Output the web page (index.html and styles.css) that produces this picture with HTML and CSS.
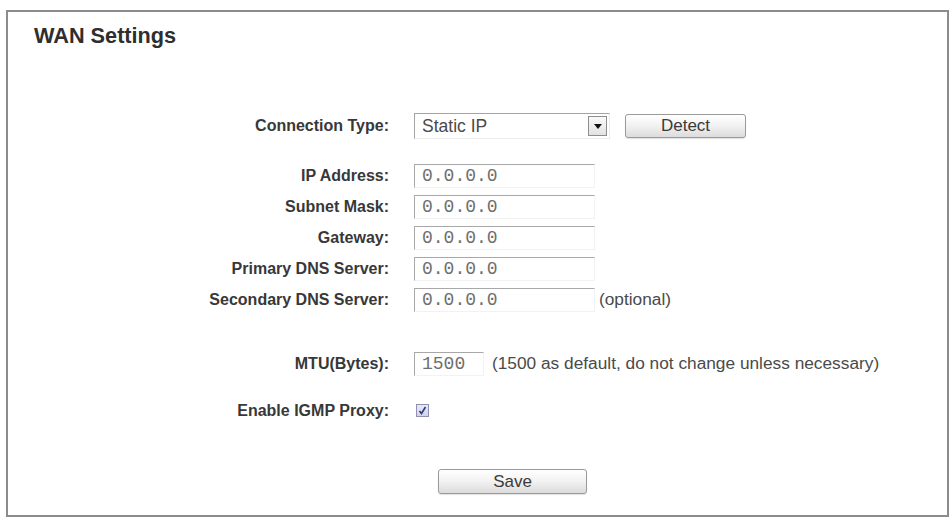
FILE: index.html
```html
<!DOCTYPE html>
<html lang="en">
<head>
<meta charset="utf-8">
<title>WAN Settings</title>
<link rel="stylesheet" href="styles.css">
</head>
<body>
<div class="frame">
  <h1 class="title">WAN Settings</h1>

  <form class="form">
    <div class="row row-conn">
      <label class="label">Connection Type:</label>
      <div class="ctrl">
        <div class="select">
          <span class="select-text">Static IP</span>
          <span class="select-arrow">
            <svg width="8" height="5" viewBox="0 0 8 5"><path d="M0 0H8L4 5Z" fill="#111"/></svg>
          </span>
        </div>
        <button type="button" class="btn btn-detect">Detect</button>
      </div>
    </div>

    <div class="group">
      <div class="row">
        <label class="label">IP Address:</label>
        <div class="ctrl"><input class="field" type="text" value="0.0.0.0"></div>
      </div>
      <div class="row">
        <label class="label">Subnet Mask:</label>
        <div class="ctrl"><input class="field" type="text" value="0.0.0.0"></div>
      </div>
      <div class="row">
        <label class="label">Gateway:</label>
        <div class="ctrl"><input class="field" type="text" value="0.0.0.0"></div>
      </div>
      <div class="row">
        <label class="label">Primary DNS Server:</label>
        <div class="ctrl"><input class="field" type="text" value="0.0.0.0"></div>
      </div>
      <div class="row">
        <label class="label">Secondary DNS Server:</label>
        <div class="ctrl"><input class="field" type="text" value="0.0.0.0"><span class="note note-opt">(optional)</span></div>
      </div>
    </div>

    <div class="row row-mtu">
      <label class="label">MTU(Bytes):</label>
      <div class="ctrl"><input class="field field-short" type="text" value="1500"><span class="note note-mtu">(1500 as default, do not change unless necessary)</span></div>
    </div>

    <div class="row row-igmp">
      <label class="label">Enable IGMP Proxy:</label>
      <div class="ctrl">
        <span class="check">
          <svg width="9" height="9" viewBox="0 0 9 9"><path d="M1.5 5L3.5 7.5L7.5 1" fill="none" stroke="#2a3a8a" stroke-width="1.6"/></svg>
        </span>
      </div>
    </div>

    <div class="row row-save">
      <span class="label"></span>
      <div class="ctrl"><button type="button" class="btn btn-save">Save</button></div>
    </div>
  </form>
</div>
</body>
</html>
```

FILE: styles.css
```css
* { box-sizing: border-box; }

html, body {
  margin: 0;
  padding: 0;
  background: #ffffff;
}

body {
  font-family: "Liberation Sans", Arial, sans-serif;
  color: #3a3a3a;
}

.frame {
  margin: 10px 2px 0 6px;
  height: 507px;
  border: 2px solid #8c8c8c;
  background: #fff;
}

.title {
  margin: 12px 0 0 26px;
  font-size: 21.7px;
  line-height: 24px;
  font-weight: bold;
  color: #2e2e2e;
}

.form {
  display: flex;
  flex-direction: column;
  margin-top: 65px;
}

.row {
  display: flex;
  align-items: center;
  height: 31px;
}

.label {
  width: 381px;
  text-align: right;
  font-size: 16px;
  font-weight: bold;
  color: #383838;
  flex: none;
}

.ctrl {
  margin-left: 25px;
  display: flex;
  align-items: center;
}

.row-conn { height: 26px; }

.select {
  width: 196px;
  height: 26px;
  display: flex;
  align-items: center;
  justify-content: space-between;
  border-top: 1px solid #a4a4a4;
  border-left: 1px solid #a4a4a4;
  border-right: 1px solid #ececec;
  border-bottom: 1px solid #ececec;
  padding: 0 2px 0 7px;
}

.select-text {
  font-size: 17.5px;
  color: #4a4a4a;
}

.select-arrow {
  width: 19px;
  height: 20px;
  display: flex;
  align-items: center;
  justify-content: center;
  border: 1px solid #8e8e8e;
  background: linear-gradient(#fafafa, #e2e2e2);
}

.btn {
  font-family: "Liberation Sans", Arial, sans-serif;
  font-size: 17px;
  color: #3a3a3a;
  border: 1px solid #9a9a9a;
  border-radius: 3px;
  background: linear-gradient(#ffffff 0%, #f1f1f1 50%, #dcdcdc 100%);
  box-shadow: 0 1px 1px rgba(0, 0, 0, 0.12);
  padding: 0;
}

.btn-detect {
  margin-left: 15px;
  width: 121px;
  height: 24px;
}

.group {
  display: flex;
  flex-direction: column;
  margin-top: 21px;
}

.field {
  width: 181px;
  height: 24px;
  margin: 0;
  padding: 0 0 0 7px;
  font-family: "Liberation Mono", "Courier New", monospace;
  font-size: 18px;
  color: #6e6e6e;
  background: #fff;
  border-top: 1px solid #a8a8a8;
  border-left: 1px solid #a8a8a8;
  border-right: 1px solid #f2f2f2;
  border-bottom: 1px solid #f2f2f2;
  outline: none;
}

.field-short { width: 70px; }

.note {
  font-size: 17.3px;
  color: #4a4a4a;
}

.note-opt { margin-left: 4px; }
.note-mtu { margin-left: 8px; }

.row-mtu { margin-top: 33px; }

.row-igmp { margin-top: 16px; }

.check {
  margin-left: 2px;
  width: 13px;
  height: 13px;
  display: flex;
  align-items: center;
  justify-content: center;
  border: 1px solid #9090b4;
  background: linear-gradient(#e8e8f4, #d4d4e6);
}

.row-save {
  margin-top: 43px;
  height: 25px;
}

.btn-save {
  margin-left: 24px;
  width: 149px;
  height: 25px;
}
```
